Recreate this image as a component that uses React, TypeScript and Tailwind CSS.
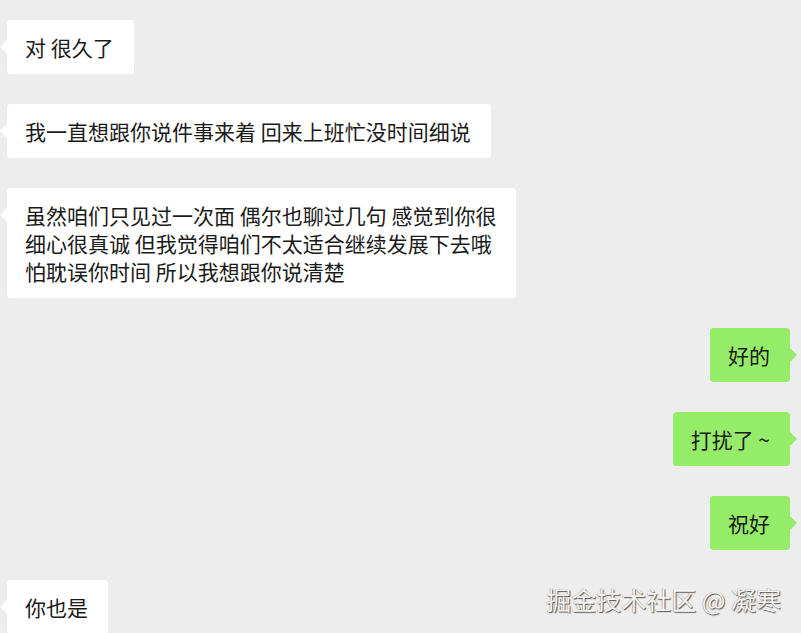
import React from 'react';

type Msg = { side: 'left' | 'right'; lines: string[] };

const messages: Msg[] = [
  { side: 'left', lines: ['对 很久了'] },
  { side: 'left', lines: ['我一直想跟你说件事来着 回来上班忙没时间细说'] },
  {
    side: 'left',
    lines: [
      '虽然咱们只见过一次面 偶尔也聊过几句 感觉到你很',
      '细心很真诚 但我觉得咱们不太适合继续发展下去哦',
      '怕耽误你时间 所以我想跟你说清楚',
    ],
  },
  { side: 'right', lines: ['好的'] },
  { side: 'right', lines: ['打扰了 ~'] },
  { side: 'right', lines: ['祝好'] },
  { side: 'left', lines: ['你也是'] },
];

const Bubble: React.FC<{ msg: Msg }> = ({ msg }) => {
  const mine = msg.side === 'right';
  return (
    <div className={mine ? 'flex justify-end pr-[11px]' : 'flex justify-start pl-[7px]'}>
      <div
        className={
          'relative rounded-[4px] pl-[18px] pr-[20px] py-[13px] text-[21px] leading-[28px] text-[#1a1a1a] whitespace-nowrap ' +
          (mine ? 'bg-[#95ec69]' : 'bg-white')
        }
      >
        {/* tail */}
        {mine ? (
          <span className="absolute right-[-7px] top-[20px] w-0 h-0 border-y-[7px] border-y-transparent border-l-[7px] border-l-[#95ec69]" />
        ) : (
          <span className="absolute left-[-7px] top-[20px] w-0 h-0 border-y-[7px] border-y-transparent border-r-[7px] border-r-white" />
        )}
        {msg.lines.map((l, i) => (
          <div key={i}>{l}</div>
        ))}
      </div>
    </div>
  );
};

export default function App() {
  return (
    <div
      className="relative w-[801px] h-[633px] overflow-hidden bg-[#ededed]"
      style={{ fontFamily: '"Noto Sans CJK SC", "Noto Sans", sans-serif' }}
    >
      <div className="flex flex-col gap-[30px] pt-[20px]">
        {messages.map((m, i) => (
          <Bubble key={i} msg={m} />
        ))}
      </div>

      {/* watermark */}
      <div className="absolute right-[20px] top-[582px] text-[25px] leading-[34px] text-[#f4f4f4] whitespace-nowrap [text-shadow:1px_1px_1px_#555,-0.5px_-0.5px_0_#999]">
        掘金技术社区 @ 凝寒
      </div>
    </div>
  );
}
